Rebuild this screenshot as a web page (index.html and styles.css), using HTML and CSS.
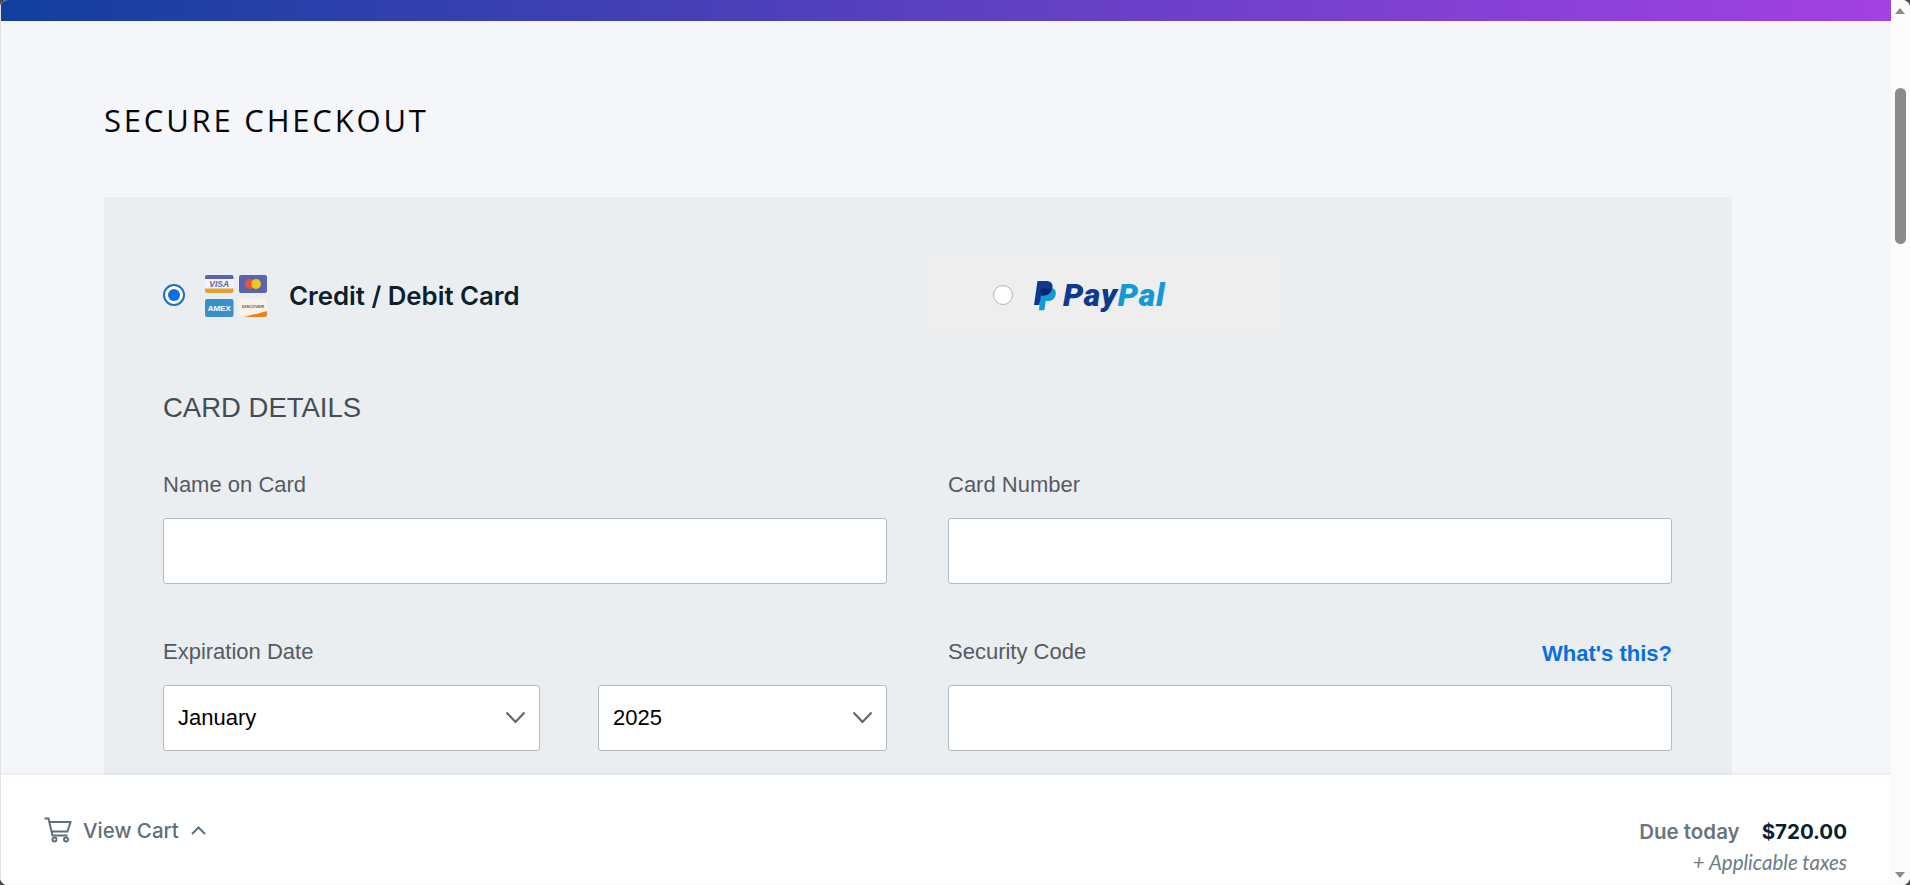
FILE: index.html
```html
<!DOCTYPE html>
<html lang="en">
<head>
	<meta charset="UTF-8">
	<title>Secure Checkout</title>
	<link rel="stylesheet" href="styles.css">
</head>
<body>

<div class="page">
	<div class="top_bar"></div>

	<div class="content">
		<h1 class="title">SECURE CHECKOUT</h1>

		<div class="panel">
			<!--付款方式-->
			<div class="pay_tabs">
				<label class="tab_card">
					<span class="radio radio_on"></span>
					<svg class="card_icons" width="62" height="42" viewBox="0 0 62 42">
						<rect width="28.500" height="18" rx="2" fill="#f5f5f7"/>
						<path d="M0 4V2a2 2 0 0 1 2-2h24.500a2 2 0 0 1 2 2v2z" fill="#5a64ae"/>
						<path d="M0 13.500V16a2 2 0 0 0 2 2h24.500a2 2 0 0 0 2-2v-2.500z" fill="#e3a12f"/>
						<text x="14.200" y="12" class="ic_visa">VISA</text>
						<rect x="34" width="28" height="18" rx="2" fill="#5a64ae"/>
						<circle cx="44.700" cy="9" r="5" fill="#e8503f"/>
						<circle cx="51" cy="9" r="5" fill="#f2c518"/>
						<rect y="24" width="28.500" height="18" rx="2" fill="#3a8fcb"/>
						<text x="14.200" y="36" class="ic_amex">AMEX</text>
						<rect x="34" y="24" width="28" height="18" rx="2" fill="#f9f3ea"/>
						<text x="48" y="33" class="ic_disc">DISCOVER</text>
						<path d="M39 42L62 36v4a2 2 0 0 1-2 2z" fill="#ef8124"/>
					</svg>
					<span class="tab_txt">Credit / Debit Card</span>
				</label>
				<label class="tab_paypal">
					<span class="radio"></span>
					<svg class="pp_mark" width="22" height="30" viewBox="0 0 22 30">
						<path d="M7 7h9.500c3.500 0 5.800 2.200 5.300 6-.6 4.500-3.500 7-7.500 7h-2.500l-1.400 8.500a1 1 0 0 1-1 .8H5z" fill="#139ad6"/>
						<path d="M3.500 0H12c4.500 0 7.200 2.500 6.500 6.800-.8 5-4.200 7.700-8.800 7.700H7L5.500 23.300a1 1 0 0 1-1 .8H0z" fill="#0d3a8f"/>
						<path d="M6.600 7.500h9.700c.5 3.800-2.500 7-6.600 7H7z" fill="#0a2470"/>
					</svg>
					<span class="pp_txt">Pay<em>Pal</em></span>
				</label>
			</div>

			<h2 class="sec_title">CARD DETAILS</h2>

			<div class="form_grid">
				<div class="field">
					<div class="lab_row"><label class="lab">Name on Card</label></div>
					<input class="ipt" type="text">
				</div>
				<div class="field">
					<div class="lab_row"><label class="lab">Card Number</label></div>
					<input class="ipt" type="text">
				</div>
				<div class="field">
					<div class="lab_row"><label class="lab">Expiration Date</label></div>
					<div class="date_row">
						<div class="slct slct_month">
							<select class="slct_box">
								<option>January</option>
							</select>
							<svg class="slct_arr" width="21" height="13" viewBox="0 0 21 13"><path d="M1.500 1.500l9 9.500 9-9.500" fill="none" stroke="#666" stroke-width="2.200"/></svg>
						</div>
						<div class="slct slct_year">
							<select class="slct_box">
								<option>2025</option>
							</select>
							<svg class="slct_arr" width="21" height="13" viewBox="0 0 21 13"><path d="M1.500 1.500l9 9.500 9-9.500" fill="none" stroke="#666" stroke-width="2.200"/></svg>
						</div>
					</div>
				</div>
				<div class="field">
					<div class="lab_row">
						<label class="lab">Security Code</label>
						<a href="javascript:;" class="whats">What's this?</a>
					</div>
					<input class="ipt" type="text">
				</div>
			</div>
		</div>
	</div>

	<!--底部固定条-->
	<div class="foot_bar">
		<a href="javascript:;" class="view_cart">
			<svg width="28" height="26" viewBox="0 0 28 26" fill="none" stroke="#5f6f7b" stroke-width="2">
				<path d="M0.500 1.500h4l4 17h15"/>
				<path d="M5.500 5h21l-3 9.500H8"/>
				<circle cx="10.500" cy="22.500" r="2"/>
				<circle cx="22" cy="22.500" r="2"/>
			</svg>
			<span>View Cart</span>
			<svg class="cart_arr" width="15" height="9" viewBox="0 0 15 9" fill="none" stroke="#5f6f7b" stroke-width="2"><path d="M1 8l6.500-6.500L14 8"/></svg>
		</a>
		<div class="due">
			<div class="due_row">
				<span class="due_txt">Due today</span>
				<span class="due_num">$720.00</span>
			</div>
			<div class="due_tax">+ Applicable taxes</div>
		</div>
	</div>
</div>

<div class="scroll_bar">
	<i class="arr_up"></i>
	<i class="thumb"></i>
	<i class="arr_down"></i>
</div>

</body>
</html>
```

FILE: styles.css
```css
*{margin:0; padding:0; box-sizing:border-box;}
html{height:100%; overflow:hidden; background:#4a4a4a;}
body{display:flex; height:100%; overflow:hidden; border-radius:8px; background:#f4f6fa; font-family:"Liberation Sans",Arial,sans-serif;}

.page{position:relative; flex:1; height:100%; overflow:hidden; background:#f4f6fa; border-left:1px solid #dfe1e5;}
.top_bar{height:21px; background:linear-gradient(90deg,#123f9e,#a441e4);}
.content{padding:0 159px 0 103px;}
.title{font:500 31px/40px "Open Sans",sans-serif; letter-spacing:2.800px; color:#050505; padding-top:79px; height:176px;}

/*付款方式*/
.panel{background:#ebeef1; padding:61px 59px 120px;}
.pay_tabs{display:flex; align-items:center; height:74px;}
.tab_card{display:flex; align-items:center; width:762px;}
.radio{display:block; width:22px; height:22px; border:1px solid #a9b6c2; border-radius:50%; background:#fff;}
.radio_on{border:2px solid #1f6fb8; position:relative;}
.radio_on::after{content:""; position:absolute; top:3px; left:3px; width:12px; height:12px; border-radius:50%; background:#0a6fe0;}
.card_icons{margin:2px 0 0 20px;}
.ic_visa{font:italic 700 8.500px "Liberation Sans",sans-serif; fill:#5a64a4; text-anchor:middle;}
.ic_amex{font:700 8px "Liberation Sans",sans-serif; fill:#fff; text-anchor:middle;}
.ic_disc{font:700 4.200px "Liberation Sans",sans-serif; fill:#555; text-anchor:middle;}
.tab_txt{margin-left:22px; font:600 25.800px "Inter",sans-serif; color:#0c1f2c;}
.tab_paypal{display:flex; align-items:center; width:355px; height:74px; padding-left:68px; background:#eeeeef;}
.tab_paypal .radio{width:20px; height:20px;}
.pp_mark{margin:2px 0 0 21px;}
.pp_txt{margin-left:7px; font:italic 900 32px "Roboto",sans-serif; letter-spacing:.8px; color:#0d3a8f;}
.pp_txt em{color:#139ad6;}

.sec_title{font-weight:400; font-size:27.500px; line-height:30px; color:#444c55; margin-top:61px;}

/*表单*/
.form_grid{display:grid; grid-template-columns:724px 724px; column-gap:61px; row-gap:55px; margin-top:49px;}
.lab_row{display:flex; justify-content:space-between; align-items:center; height:24px; margin-bottom:22px;}
.lab{font-size:22px; color:#555b61; position:relative; top:1px;}
.whats{font-size:22px; font-weight:700; color:#0a6fdc; text-decoration:none; position:relative; top:3px;}
.ipt{display:block; width:100%; height:66px; background:#fff; border:1px solid #b3bbc2; border-radius:3px;}
.date_row{display:flex; justify-content:space-between;}
.slct{position:relative; height:66px;}
.slct_month{width:377px;}
.slct_year{width:289px;}
.slct_box{width:100%; height:100%; padding:0 0 2px 14px; appearance:none; background:#fff; border:1px solid #b3bbc2; border-radius:3px; font:22px "Liberation Sans",sans-serif; color:#000;}
.slct_arr{position:absolute; top:26px; right:14px;}

/*底部固定条*/
.foot_bar{position:absolute; left:0; right:0; bottom:0; height:110px; display:flex; justify-content:space-between; padding:0 44px 0 43px; background:#fff; box-shadow:0 -1px 4px rgba(0,0,0,.07), inset 0 -3px 3px rgba(0,0,0,.02);}
.view_cart{display:flex; align-items:center; height:110px; font:500 20.500px "Inter",sans-serif; color:#5f6f7b; text-decoration:none;}
.view_cart span{margin:0 12px 0 11px;}
.due{display:flex; flex-direction:column; align-items:flex-end; padding-top:43px;}
.due_row{display:flex; gap:22px; align-items:center; height:26px;}
.due_txt{font:600 20.500px "Inter",sans-serif; color:#68757f;}
.due_num{font:700 20.500px "Inter",sans-serif; color:#0c1f2c;}
.due_tax{margin-top:6px; font:italic 400 20.500px "Lato",sans-serif; color:#6d7a84;}

/*滚动条*/
.scroll_bar{position:relative; width:19px; height:100%; background:#fbfbfb;}
.thumb{position:absolute; top:88px; left:4px; width:11px; height:156px; border-radius:6px; background:#8b8b8b;}
.arr_up,.arr_down{position:absolute; left:4px; width:0; height:0; border-left:5.500px solid transparent; border-right:5.500px solid transparent;}
.arr_up{top:8px; border-bottom:6px solid #8b8b8b;}
.arr_down{bottom:7px; border-top:6px solid #8b8b8b;}
```
